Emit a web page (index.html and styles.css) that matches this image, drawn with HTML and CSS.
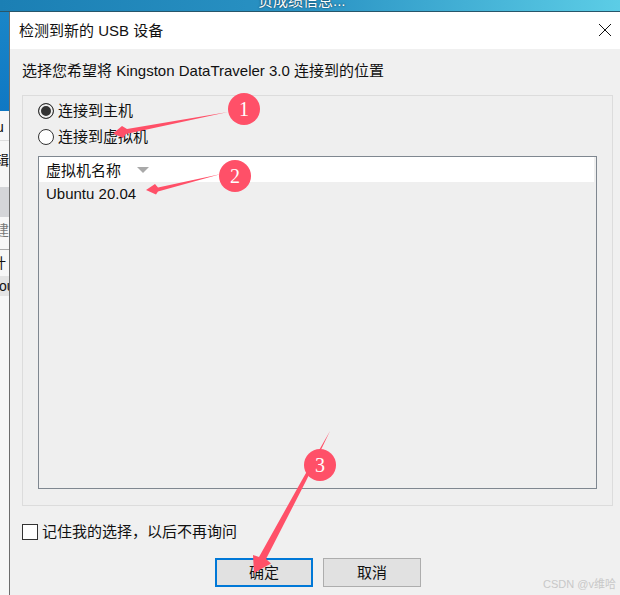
FILE: index.html
```html
<!DOCTYPE html>
<html lang="zh-CN">

<head>
    <meta charset="UTF-8">
    <title>检测到新的 USB 设备</title>
    <link rel="stylesheet" href="styles.css">
</head>

<body>

    <div class="desktop">
        <div class="topbar"><span class="topbar-text">负成绩信息...</span></div>

        <div class="workspace">
            <div class="behind">
                <div class="behind-blue"></div>
                <div class="behind-row behind-u">u</div>
                <div class="behind-row behind-edit">辑</div>
                <div class="behind-gray"></div>
                <div class="behind-row behind-new">建</div>
                <div class="behind-row behind-calc">计</div>
                <div class="behind-row behind-ou">ou</div>
            </div>

            <div class="dialog">
                <div class="titlebar">
                    <span class="title">检测到新的 USB 设备</span>
                    <svg class="close" width="14" height="14" viewBox="0 0 14 14">
                        <path d="M1 1 L13 13 M13 1 L1 13" stroke="#111" stroke-width="1" fill="none" />
                    </svg>
                </div>

                <div class="content">
                    <p class="prompt">选择您希望将 Kingston DataTraveler 3.0 连接到的位置</p>

                    <div class="group">
                        <div class="radio-row">
                            <span class="radio checked"></span>
                            <span class="option-label">连接到主机</span>
                        </div>
                        <div class="radio-row">
                            <span class="radio"></span>
                            <span class="option-label">连接到虚拟机</span>
                        </div>

                        <div class="vm-list">
                            <div class="vm-header">
                                <span>虚拟机名称</span>
                                <span class="sort"></span>
                            </div>
                            <div class="vm-item">Ubuntu 20.04</div>
                        </div>
                    </div>

                    <div class="remember">
                        <span class="checkbox"></span>
                        <span class="option-label">记住我的选择，以后不再询问</span>
                    </div>

                    <div class="buttons">
                        <button class="btn btn-default">确定</button>
                        <button class="btn">取消</button>
                    </div>
                </div>
            </div>
        </div>

        <!-- annotations drawn over the screenshot -->
        <svg class="arrows" width="620" height="595" viewBox="0 0 620 595">
            <polygon points="228,112 127,129 122,126 113,133.5 123,138 126,134" />
            <polygon points="221,174 158,187.5 155,184 146,190 156,194.5 158,191.5" />
            <polygon points="330,431 306,481 266,559 271,563.5 254,573 253,555 259,557 302,480" />
        </svg>
        <div class="badge badge-1">1</div>
        <div class="badge badge-2">2</div>
        <div class="badge badge-3">3</div>

        <div class="watermark">CSDN @v维哈</div>
    </div>

</body>

</html>
```

FILE: styles.css
```css
* {
    box-sizing: border-box;
}

body {
    margin: 0;
    font-family: "Liberation Sans", "Noto Sans CJK SC", sans-serif;
    font-size: 15px;
    color: #111;
}

.desktop {
    position: relative;
    width: 620px;
    height: 595px;
    overflow: hidden;
    display: flex;
    flex-direction: column;
    background-color: #f0f0f0;
}

.topbar {
    height: 12px;
    flex-shrink: 0;
    background: linear-gradient(90deg, #1b7fb4, #2a93c4 50%, #5ccde6);
    border-bottom: 1px solid #27566a;
    overflow: hidden;
    padding-left: 258px;
}

.topbar-text {
    display: block;
    margin-top: -9px;
    color: #fff;
    line-height: 20px;
    text-shadow: 0 0 2px #123;
}

.workspace {
    flex: 1;
    display: flex;
    min-height: 0;
}

.behind {
    width: 10px;
    flex-shrink: 0;
    background-color: #f7f7f7;
    overflow: hidden;
    font-size: 14px;
    border-right: 1px solid #6d6d6d;
}

.behind-blue {
    height: 99px;
    background: linear-gradient(#1a86c8, #0f78c4);
}

.behind-row {
    white-space: nowrap;
    line-height: 20px;
}

.behind-u {
    height: 30px;
    padding-top: 6px;
    margin-left: -4px;
    border-bottom: 1px solid #ddd;
}

.behind-edit {
    height: 46px;
    padding-top: 9px;
    margin-left: -5px;
}

.behind-gray {
    height: 30px;
    background-color: #d4d5d8;
}

.behind-new {
    height: 33px;
    padding-top: 3px;
    margin-left: -5px;
    color: #777;
    border-bottom: 1px solid #aaa;
}

.behind-calc {
    height: 26px;
    padding-top: 3px;
    margin-left: -8px;
}

.behind-ou {
    height: 20px;
    margin-left: -1px;
    background-color: #e4e4e4;
}

.dialog {
    flex: 1;
    min-width: 0;
    display: flex;
    flex-direction: column;
    background-color: #f0f0f0;
}

.titlebar {
    height: 37px;
    flex-shrink: 0;
    display: flex;
    align-items: center;
    justify-content: space-between;
    padding: 0 8px 2px 9px;
    background-color: #fff;
}

.close {
    display: block;
}

.content {
    flex: 1;
    padding: 12px 7px 8px 12px;
    display: flex;
    flex-direction: column;
}

.prompt {
    margin: 0;
    height: 34px;
    line-height: 20px;
}

.group {
    height: 411px;
    padding: 2px 15px 16px 15px;
    border: 1px solid #dcdcdc;
    background-color: #efefef;
    display: flex;
    flex-direction: column;
}

.radio-row {
    height: 26px;
    display: flex;
    align-items: center;
    gap: 4px;
}

.option-label {
    padding-bottom: 3px;
}

.radio {
    width: 16px;
    height: 16px;
    border: 1px solid #333;
    border-radius: 50%;
    background-color: #fff;
}

.radio.checked {
    background-color: #333;
    box-shadow: inset 0 0 0 2px #f0f0f0;
}

.vm-list {
    flex: 1;
    margin-top: 6px;
    border: 1px solid #7f8790;
    padding-right: 1px;
}

.vm-header {
    height: 25px;
    padding-left: 7px;
    display: flex;
    align-items: center;
    gap: 16px;
    background-color: #fff;
    margin-right: 1px;
}

.sort {
    width: 0;
    height: 0;
    border-left: 6px solid transparent;
    border-right: 6px solid transparent;
    border-top: 6px solid #a9a9a9;
}

.vm-item {
    padding-left: 7px;
    line-height: 24px;
}

.remember {
    margin-top: 18px;
    height: 16px;
    display: flex;
    align-items: center;
    gap: 4px;
}

.checkbox {
    width: 16px;
    height: 16px;
    border: 1px solid #333;
    background-color: #fff;
}

.buttons {
    margin-top: 18px;
    padding-left: 193px;
    display: flex;
    gap: 10px;
}

.btn {
    width: 98px;
    height: 29px;
    padding: 0 0 3px;
    border: 1px solid #adadad;
    background-color: #e1e1e1;
    font-family: inherit;
    font-size: 15px;
    color: #111;
}

.btn-default {
    border: 2px solid #0078d7;
}

.arrows {
    position: absolute;
    left: 0;
    top: 0;
    fill: #ff5068;
}

.badge {
    position: absolute;
    width: 32px;
    height: 32px;
    border-radius: 50%;
    background-color: #ff5068;
    color: #fff;
    font-family: "Liberation Serif", serif;
    font-size: 20px;
    line-height: 32px;
    text-align: center;
}

.badge-1 {
    left: 228px;
    top: 93px;
}

.badge-2 {
    left: 219px;
    top: 160px;
}

.badge-3 {
    left: 304px;
    top: 449px;
}

.watermark {
    position: absolute;
    right: 4px;
    bottom: 4px;
    font-size: 11px;
    color: #c8c8c8;
}
```
